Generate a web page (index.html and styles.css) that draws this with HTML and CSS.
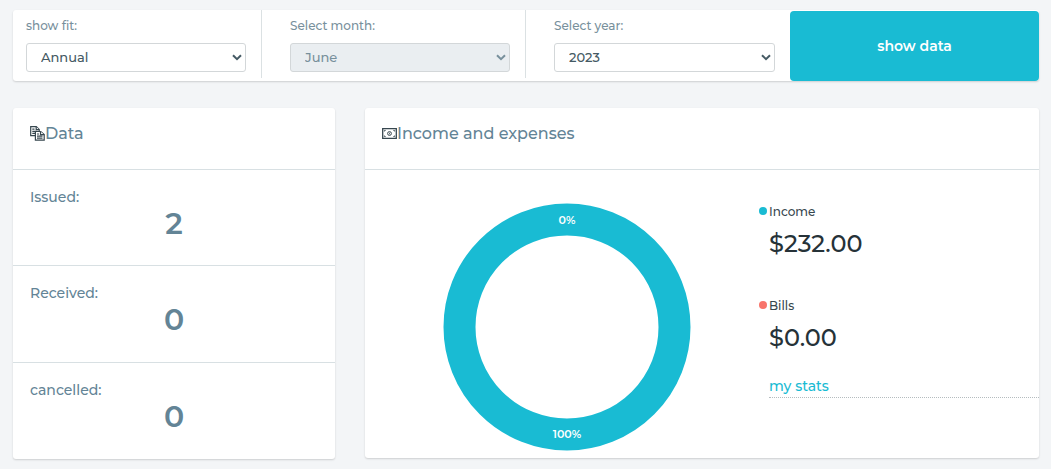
FILE: index.html
```html
<!DOCTYPE html>
<html lang="en">
<head>
<meta charset="utf-8">
<title>Income and expenses</title>
<link rel="stylesheet" href="styles.css">
</head>
<body>
<form class="filters">
  <div class="field">
    <label for="fit">show fit:</label>
    <div class="select-wrap">
      <select id="fit"><option>Annual</option><option>Monthly</option></select>
      <svg class="chevron" viewBox="0 0 10 7"><path d="M1 1.2l4 4 4-4"/></svg>
    </div>
  </div>
  <div class="field">
    <label for="month">Select month:</label>
    <div class="select-wrap">
      <select id="month" disabled><option>June</option></select>
      <svg class="chevron muted" viewBox="0 0 10 7"><path d="M1 1.2l4 4 4-4"/></svg>
    </div>
  </div>
  <div class="field">
    <label for="year">Select year:</label>
    <div class="select-wrap">
      <select id="year"><option>2023</option><option>2022</option></select>
      <svg class="chevron" viewBox="0 0 10 7"><path d="M1 1.2l4 4 4-4"/></svg>
    </div>
  </div>
  <button class="show-data" type="button">show data</button>
</form>

<main class="panels">
  <section class="card">
    <header class="card-head">
      <svg class="icon" viewBox="0 0 15 15" fill="#fff" stroke="#37474f" stroke-width="1.2">
        <path d="M.7.7h5.6l2.9 2.9v6H.7z"/><path d="M6.2.7v3h3M2.3 3.2h2.2M2.3 5.3h5.2M2.3 7.4h5.2"/>
        <path d="M5.4 5.5h5.3l3.5 3.1v5.6H5.4z"/><path d="M10.5 5.5v3.2h3.6M7 8h2M7 10.1h5.5M7 12.1h5.5"/>
      </svg>
      <h2>Data</h2>
    </header>
    <dl class="counts">
      <div class="count"><dt>Issued:</dt><dd>2</dd></div>
      <div class="count"><dt>Received:</dt><dd>0</dd></div>
      <div class="count"><dt>cancelled:</dt><dd>0</dd></div>
    </dl>
  </section>

  <section class="card balance">
    <header class="card-head">
      <svg class="icon" viewBox="0 0 15 15" fill="none" stroke="#37474f">
        <path stroke-width="1.3" d="M.7 2.7h13.6v9.6H.7z"/>
        <circle cx="7.5" cy="7.5" r="1.9"/><path stroke-width=".8" d="M7.5 6.7v1.6"/>
        <path stroke-width=".9" d="M2.4 5.5V4.4h1.3M11.3 4.4h1.3v1.1M12.6 9.5v1.1h-1.3M3.7 10.6H2.4V9.5"/>
      </svg>
      <h2>Income and expenses</h2>
    </header>
    <div class="balance-body">
      <svg class="donut" viewBox="0 0 248 248" role="img" aria-label="Income 100%, bills 0%">
        <circle cx="124" cy="124" r="107.5"/>
        <text x="124" y="21">0%</text>
        <text x="124" y="235">100%</text>
      </svg>
      <div class="legend">
        <div class="entry income"><p class="name">Income</p><p class="amount">$232.00</p></div>
        <div class="entry bills"><p class="name">Bills</p><p class="amount">$0.00</p></div>
        <div class="more"><a href="#">my stats</a></div>
      </div>
    </div>
  </section>
</main>
</body>
</html>
```
FILE: styles.css
```css
* { box-sizing: border-box; margin: 0; }

body {
  padding: 10px 12px 8px 13px;
  background: #f3f5f7;
  color: #263238;
  font-family: Montserrat, Inter, sans-serif;
  font-weight: 500;
}

.filters {
  display: grid;
  grid-template-columns: 249fr 264fr 264fr 249fr;
  margin-bottom: 27px;
  background: #fff;
  border-radius: 3px;
  box-shadow: 0 1px 2px rgba(0, 0, 0, .16);
}

.field {
  min-width: 0;
  margin-bottom: 3px;
  padding: 6px 15px 6px 28px;
  border-right: 1px solid #dbe1e3;
}
.field:first-child { padding-left: 13px; }
.field:nth-child(3) { border-right: 0; }

.field label {
  display: block;
  margin-bottom: 7px;
  color: #78909c;
  font-size: 12px;
  line-height: 20px;
}

.select-wrap { display: grid; align-items: center; }
.select-wrap > * { grid-area: 1 / 1; }

select {
  width: 100%;
  height: 29px;
  padding: 0 24px 1px 14px;
  appearance: none;
  border: 1px solid #d3d7d9;
  border-radius: 3px;
  background: #fff;
  color: #455a64;
  font: inherit;
  font-size: 13px;
}
select:disabled { background: #eaeef1; color: #78909c; opacity: 1; }

.chevron {
  justify-self: end;
  width: 10px;
  height: 7px;
  margin-right: 4px;
  fill: none;
  stroke: #455a64;
  stroke-width: 2;
  pointer-events: none;
}
.chevron.muted { stroke: #78909c; }

.show-data {
  margin-top: 1px;
  border: 0;
  border-radius: 4px;
  background: #19bbd3;
  color: #fff;
  font: inherit;
  font-size: 14px;
  font-weight: 600;
}

.panels {
  display: grid;
  grid-template-columns: 322fr 674fr;
  gap: 30px;
  align-items: start;
}

.card {
  background: #fff;
  border-radius: 3px;
  box-shadow: 0 1px 2px rgba(0, 0, 0, .16);
}

.card-head {
  display: flex;
  align-items: flex-start;
  height: 62px;
  padding: 14px 17px;
  border-bottom: 1px solid #d8e0e3;
}
.card-head .icon { width: 15px; height: 15px; margin-top: 4px; }
.card-head h2 {
  color: #638496;
  font-size: 16px;
  font-weight: 500;
  line-height: 24px;
}

.count {
  height: 97px;
  padding: 17px;
  color: #638496;
}
.count:first-child { height: 95px; }
.count + .count { border-top: 1px solid #d8e0e3; }
.count dt { font-size: 14px; line-height: 20px; }
.count dd {
  font-size: 30px;
  font-weight: 600;
  line-height: 34px;
  text-align: center;
}

.balance-body {
  display: grid;
  grid-template-columns: 404fr 270fr;
  padding: 33px 0 7px;
}

.donut {
  justify-self: center;
  width: 248px;
  height: 248px;
}
.donut circle { fill: none; stroke: #19bbd3; stroke-width: 32; }
.donut text {
  fill: #fff;
  font-size: 11px;
  font-weight: 600;
  text-anchor: middle;
}

.entry { position: relative; height: 94px; }
.entry::before {
  content: "";
  position: absolute;
  top: 4px;
  left: -10px;
  width: 8px;
  height: 8px;
  border-radius: 50%;
  background: #19bbd3;
}
.entry.bills::before { background: #f8746a; }
.entry .name {
  color: #37474f;
  font-size: 12px;
  font-weight: 500;
  line-height: 18px;
}
.entry .amount { font-size: 24px; line-height: 46px; }
.entry.bills { height: 82px; }

.more {
  border-bottom: 1px dotted #b5bcbf;
  font-size: 14px;
  line-height: 14px;
  padding-bottom: 4px;
}
.more a { color: #19bbd3; text-decoration: none; }
```
